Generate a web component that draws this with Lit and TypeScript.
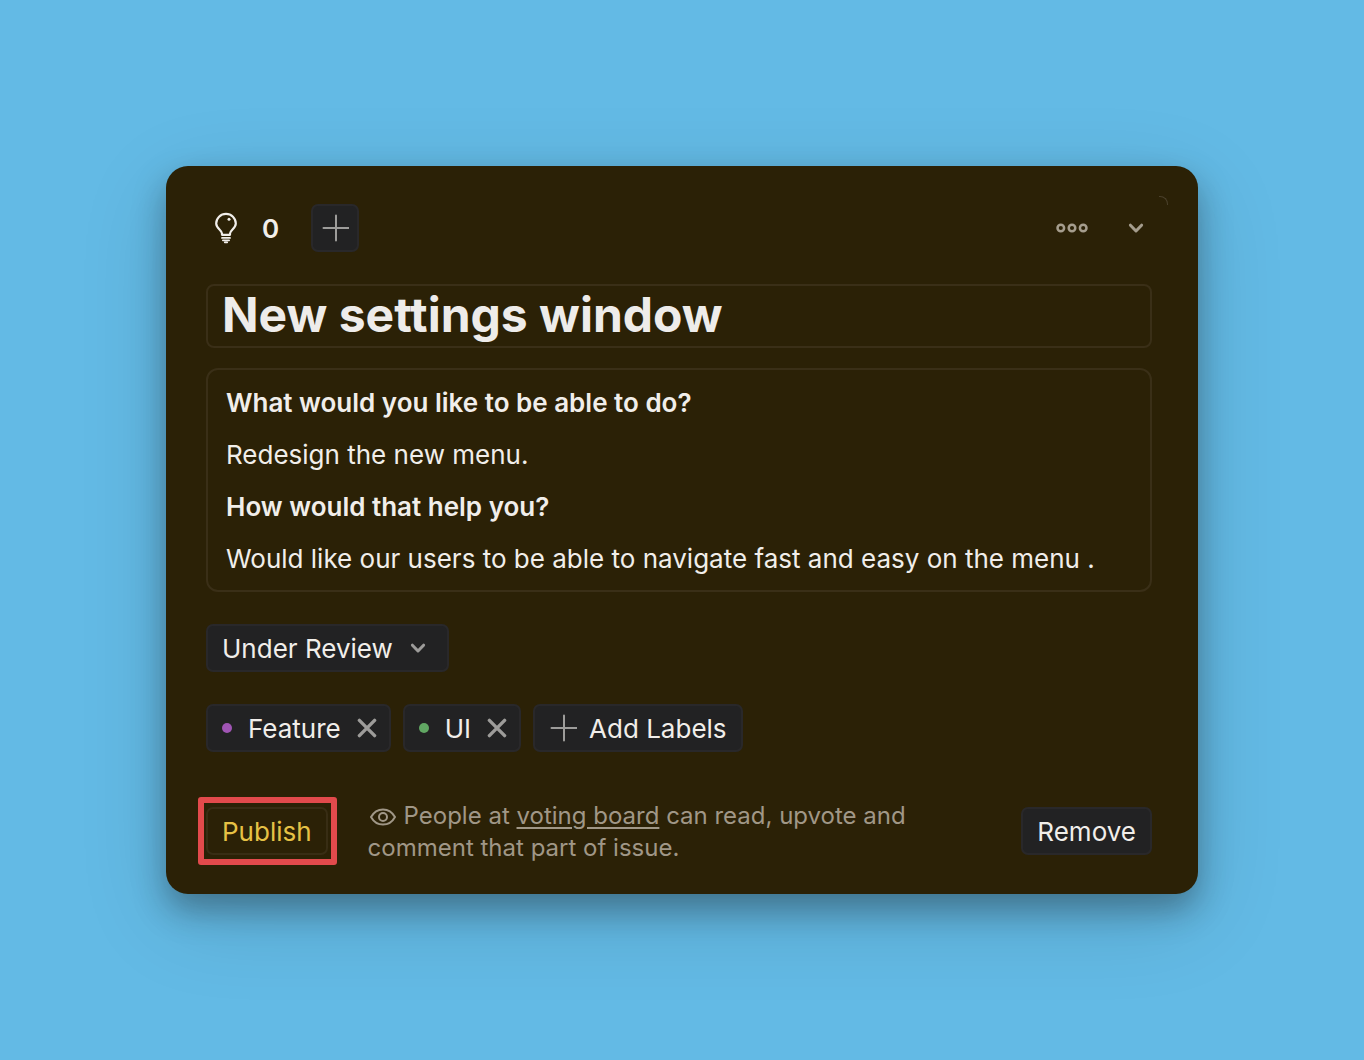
import { LitElement, html, svg, css } from "lit";
import { customElement, property, state } from "lit/decorators.js";

interface Label {
  name: string;
  tone: "purple" | "green";
}

const plusIcon = html`<svg class="icon" width="28" height="28" viewBox="0 0 28 28" aria-hidden="true">
  ${svg`<path d="M15 1.6V26.6M2.500 14H27.500" fill="none" stroke="currentColor" stroke-width="2" stroke-linecap="round" />`}
</svg>`;

const chevronIcon = html`<svg class="icon chevron" width="16" height="12" viewBox="0 0 16 12" aria-hidden="true">
  ${svg`<path d="M2.400 3.200L8 9L13.600 3.200" fill="none" stroke="currentColor" stroke-width="3" stroke-linecap="round" stroke-linejoin="round" />`}
</svg>`;

const closeIcon = html`<svg class="icon" width="20" height="20" viewBox="0 0 20 20" aria-hidden="true">
  ${svg`<path d="M2.400 2.400L17.600 17.600M17.600 2.400L2.400 17.600" fill="none" stroke="currentColor" stroke-width="3.400" stroke-linecap="round" />`}
</svg>`;

const bulbIcon = html`<svg class="icon" width="24" height="32" viewBox="0 0 24 32" aria-hidden="true">
  ${svg`<path d="M8 22.800V21.600C8 18 2.200 16.600 2.200 11.500A9.800 9.600 0 0 1 21.800 11.500C21.800 16.600 16 18 16 21.600V22.800Z" fill="none" stroke="currentColor" stroke-width="2.200" stroke-linejoin="round" />
    <circle cx="15" cy="7.200" r="1.500" fill="currentColor" />
    <path d="M8 25.900H16M8.900 28.300H15.100M10.800 30.300H13.200" stroke="currentColor" stroke-width="1.800" stroke-linecap="round" />`}
</svg>`;

const moreIcon = html`<svg class="icon" width="32" height="12" viewBox="0 0 32 12" aria-hidden="true">
  ${svg`<g fill="none" stroke="currentColor" stroke-width="2.500">
    <circle cx="4.800" cy="6" r="3.300" /><circle cx="16" cy="6" r="3.300" /><circle cx="27.200" cy="6" r="3.300" />
  </g>`}
</svg>`;

const eyeIcon = html`<svg class="eye" width="26" height="18" viewBox="0 0 26 18" aria-hidden="true">
  ${svg`<g fill="none" stroke="currentColor" stroke-width="2" stroke-linejoin="round">
    <path d="M1 9C3.600 4.300 7.800 1.400 13 1.400S22.400 4.300 25 9C22.400 13.700 18.200 16.600 13 16.600S3.600 13.700 1 9Z" />
    <circle cx="13" cy="9" r="4" />
  </g>`}
</svg>`;

const controls = css`
  * {
    box-sizing: border-box;
  }
  button,
  select,
  input {
    margin: 0;
    font: inherit;
    color: inherit;
    cursor: pointer;
  }
  .icon {
    display: block;
    flex: none;
  }
`;

@customElement("label-chip")
class LabelChip extends LitElement {
  @property() name = "";
  @property() tone = "purple";

  static styles = [
    controls,
    css`
      :host {
        display: flex;
        align-items: center;
        height: 48px;
        padding: 0 12px 0 14px;
        border: 2px solid #29282a;
        border-radius: 7px;
        background: #222223;
      }
      .dot {
        width: 10px;
        height: 10px;
        margin-right: 16px;
        border-radius: 50%;
      }
      .purple {
        background: #a055b4;
      }
      .green {
        background: #61a763;
      }
      .name {
        padding-top: 2px;
      }
      .close {
        margin-left: 16px;
        padding: 0;
        border: 0;
        background: none;
        color: #9d9c9a;
      }
    `,
  ];

  render() {
    return html`
      <span class="dot ${this.tone}"></span>
      <span class="name">${this.name}</span>
      <button
        class="close"
        aria-label="Remove ${this.name}"
        @click=${() => this.dispatchEvent(new CustomEvent("dismiss"))}
      >
        ${closeIcon}
      </button>
    `;
  }
}

@customElement("app-root")
class AppRoot extends LitElement {
  @state() private votes = 0;
  @state() private labels: Label[] = [
    { name: "Feature", tone: "purple" },
    { name: "UI", tone: "green" },
  ];

  static styles = [
    controls,
    css`
      :host {
        display: grid;
        align-items: center;
        min-height: 100vh;
        box-sizing: border-box;
        padding: 40px 166px;
        background: #63bae5;
        color: #f1eeea;
        font: 400 26px/32px Inter, "Liberation Sans", sans-serif;
      }
      .card {
        position: relative;
        display: flex;
        flex-direction: column;
        gap: 32px;
        padding: 38px 46px 30px 40px;
        border-radius: 22px;
        background: #2b2106;
        box-shadow: 0 16px 32px rgba(20, 20, 20, 0.34), 0 24px 90px rgba(0, 0, 0, 0.14);
      }
      .card::before {
        content: "";
        position: absolute;
        top: 30px;
        right: 30px;
        width: 8px;
        height: 8px;
        border-top: 1px solid #4a402b;
        border-right: 1px solid #4a402b;
        border-top-right-radius: 8px;
      }
      .bar {
        display: flex;
        align-items: center;
      }
      .votes {
        display: flex;
        align-items: center;
        gap: 24px;
        margin-left: 8px;
        font-weight: 600;
      }
      .text {
        padding-top: 2px;
      }
      .actions {
        display: flex;
        align-items: center;
        gap: 40px;
        margin-left: auto;
        margin-right: 8px;
        color: #a59d8d;
      }
      .ghost {
        padding: 0;
        border: 0;
        background: none;
      }
      .button {
        display: flex;
        align-items: center;
        gap: 12px;
        height: 48px;
        padding: 0 14px;
        border: 2px solid #29282a;
        border-radius: 7px;
        background: #222223;
      }
      .button .icon {
        color: #9d9c9a;
      }
      .upvote {
        justify-content: center;
        width: 48px;
        margin-left: 32px;
        padding: 0;
      }
      .fields {
        display: flex;
        flex-direction: column;
        gap: 20px;
      }
      .title {
        width: 100%;
        height: 64px;
        padding: 0 14px 4px;
        border: 2px solid #3a2f17;
        border-radius: 8px;
        background: none;
        color: #eeecea;
        font-size: 48px;
        font-weight: 700;
        font-variant-ligatures: none;
        cursor: text;
      }
      .description {
        display: flex;
        flex-direction: column;
        gap: 20px;
        padding: 17px 18px 15px;
        border: 2px solid #3a2f17;
        border-radius: 12px;
      }
      .description p {
        margin: 0;
      }
      .question {
        font-weight: 600;
      }
      .status {
        display: grid;
        align-self: flex-start;
        align-items: center;
      }
      .status select,
      .status .icon {
        grid-area: 1 / 1;
      }
      .status select {
        height: 48px;
        padding: 2px 54px 0 14px;
        border: 2px solid #29282a;
        border-radius: 7px;
        background: #222223;
        appearance: none;
      }
      .status .icon {
        justify-self: end;
        margin-right: 23px;
        color: #9d9c9a;
        pointer-events: none;
      }
      .labels {
        display: flex;
        flex-wrap: wrap;
        gap: 12px;
      }
      .footer {
        display: flex;
        align-items: center;
        gap: 40px;
        margin-top: 14px;
      }
      .highlight {
        position: relative;
      }
      .highlight::after {
        content: "";
        position: absolute;
        inset: -10px -9px -10px -8px;
        border: 6px solid #e24a4c;
        border-radius: 3px;
        pointer-events: none;
      }
      .publish {
        border-color: #382d14;
        background: none;
        color: #e6c145;
      }
      .note {
        flex: 1;
        margin: 0;
        padding-top: 2px;
        color: #a09787;
        font-size: 24px;
      }
      .eye {
        margin: 0 8px 0 2px;
        vertical-align: -2px;
      }
      .note a {
        color: inherit;
        text-decoration-thickness: 2px;
        text-underline-offset: 3px;
      }
    `,
  ];

  private dismiss(label: Label) {
    this.labels = this.labels.filter((item) => item !== label);
  }

  render() {
    return html`
      <main class="card">
        <header class="bar">
          <div class="votes">${bulbIcon}<span class="text">${this.votes}</span></div>
          <button class="button upvote" aria-label="Add a vote" @click=${() => this.votes++}>${plusIcon}</button>
          <div class="actions">
            <button class="ghost" aria-label="More actions">${moreIcon}</button>
            <button class="ghost" aria-label="Collapse">${chevronIcon}</button>
          </div>
        </header>

        <div class="fields">
          <input class="title" aria-label="Title" .value=${"New settings window"} />
          <section class="description" aria-label="Description">
            <p class="question">What would you like to be able to do?</p>
            <p>Redesign the new menu.</p>
            <p class="question">How would that help you?</p>
            <p>Would like our users to be able to navigate fast and easy on the menu .</p>
          </section>
        </div>

        <label class="status">
          <select aria-label="Status">
            <option>Under Review</option>
          </select>
          ${chevronIcon}
        </label>

        <div class="labels">
          ${this.labels.map(
            (label) => html`<label-chip
              .name=${label.name}
              .tone=${label.tone}
              @dismiss=${() => this.dismiss(label)}
            ></label-chip>`
          )}
          <button class="button">${plusIcon}<span class="text">Add Labels</span></button>
        </div>

        <footer class="footer">
          <div class="highlight"><button class="button publish"><span class="text">Publish</span></button></div>
          <p class="note">
            ${eyeIcon}People at <a href="#voting-board">voting board</a> can read, upvote and comment that part of issue.
          </p>
          <button class="button"><span class="text">Remove</span></button>
        </footer>
      </main>
    `;
  }
}
